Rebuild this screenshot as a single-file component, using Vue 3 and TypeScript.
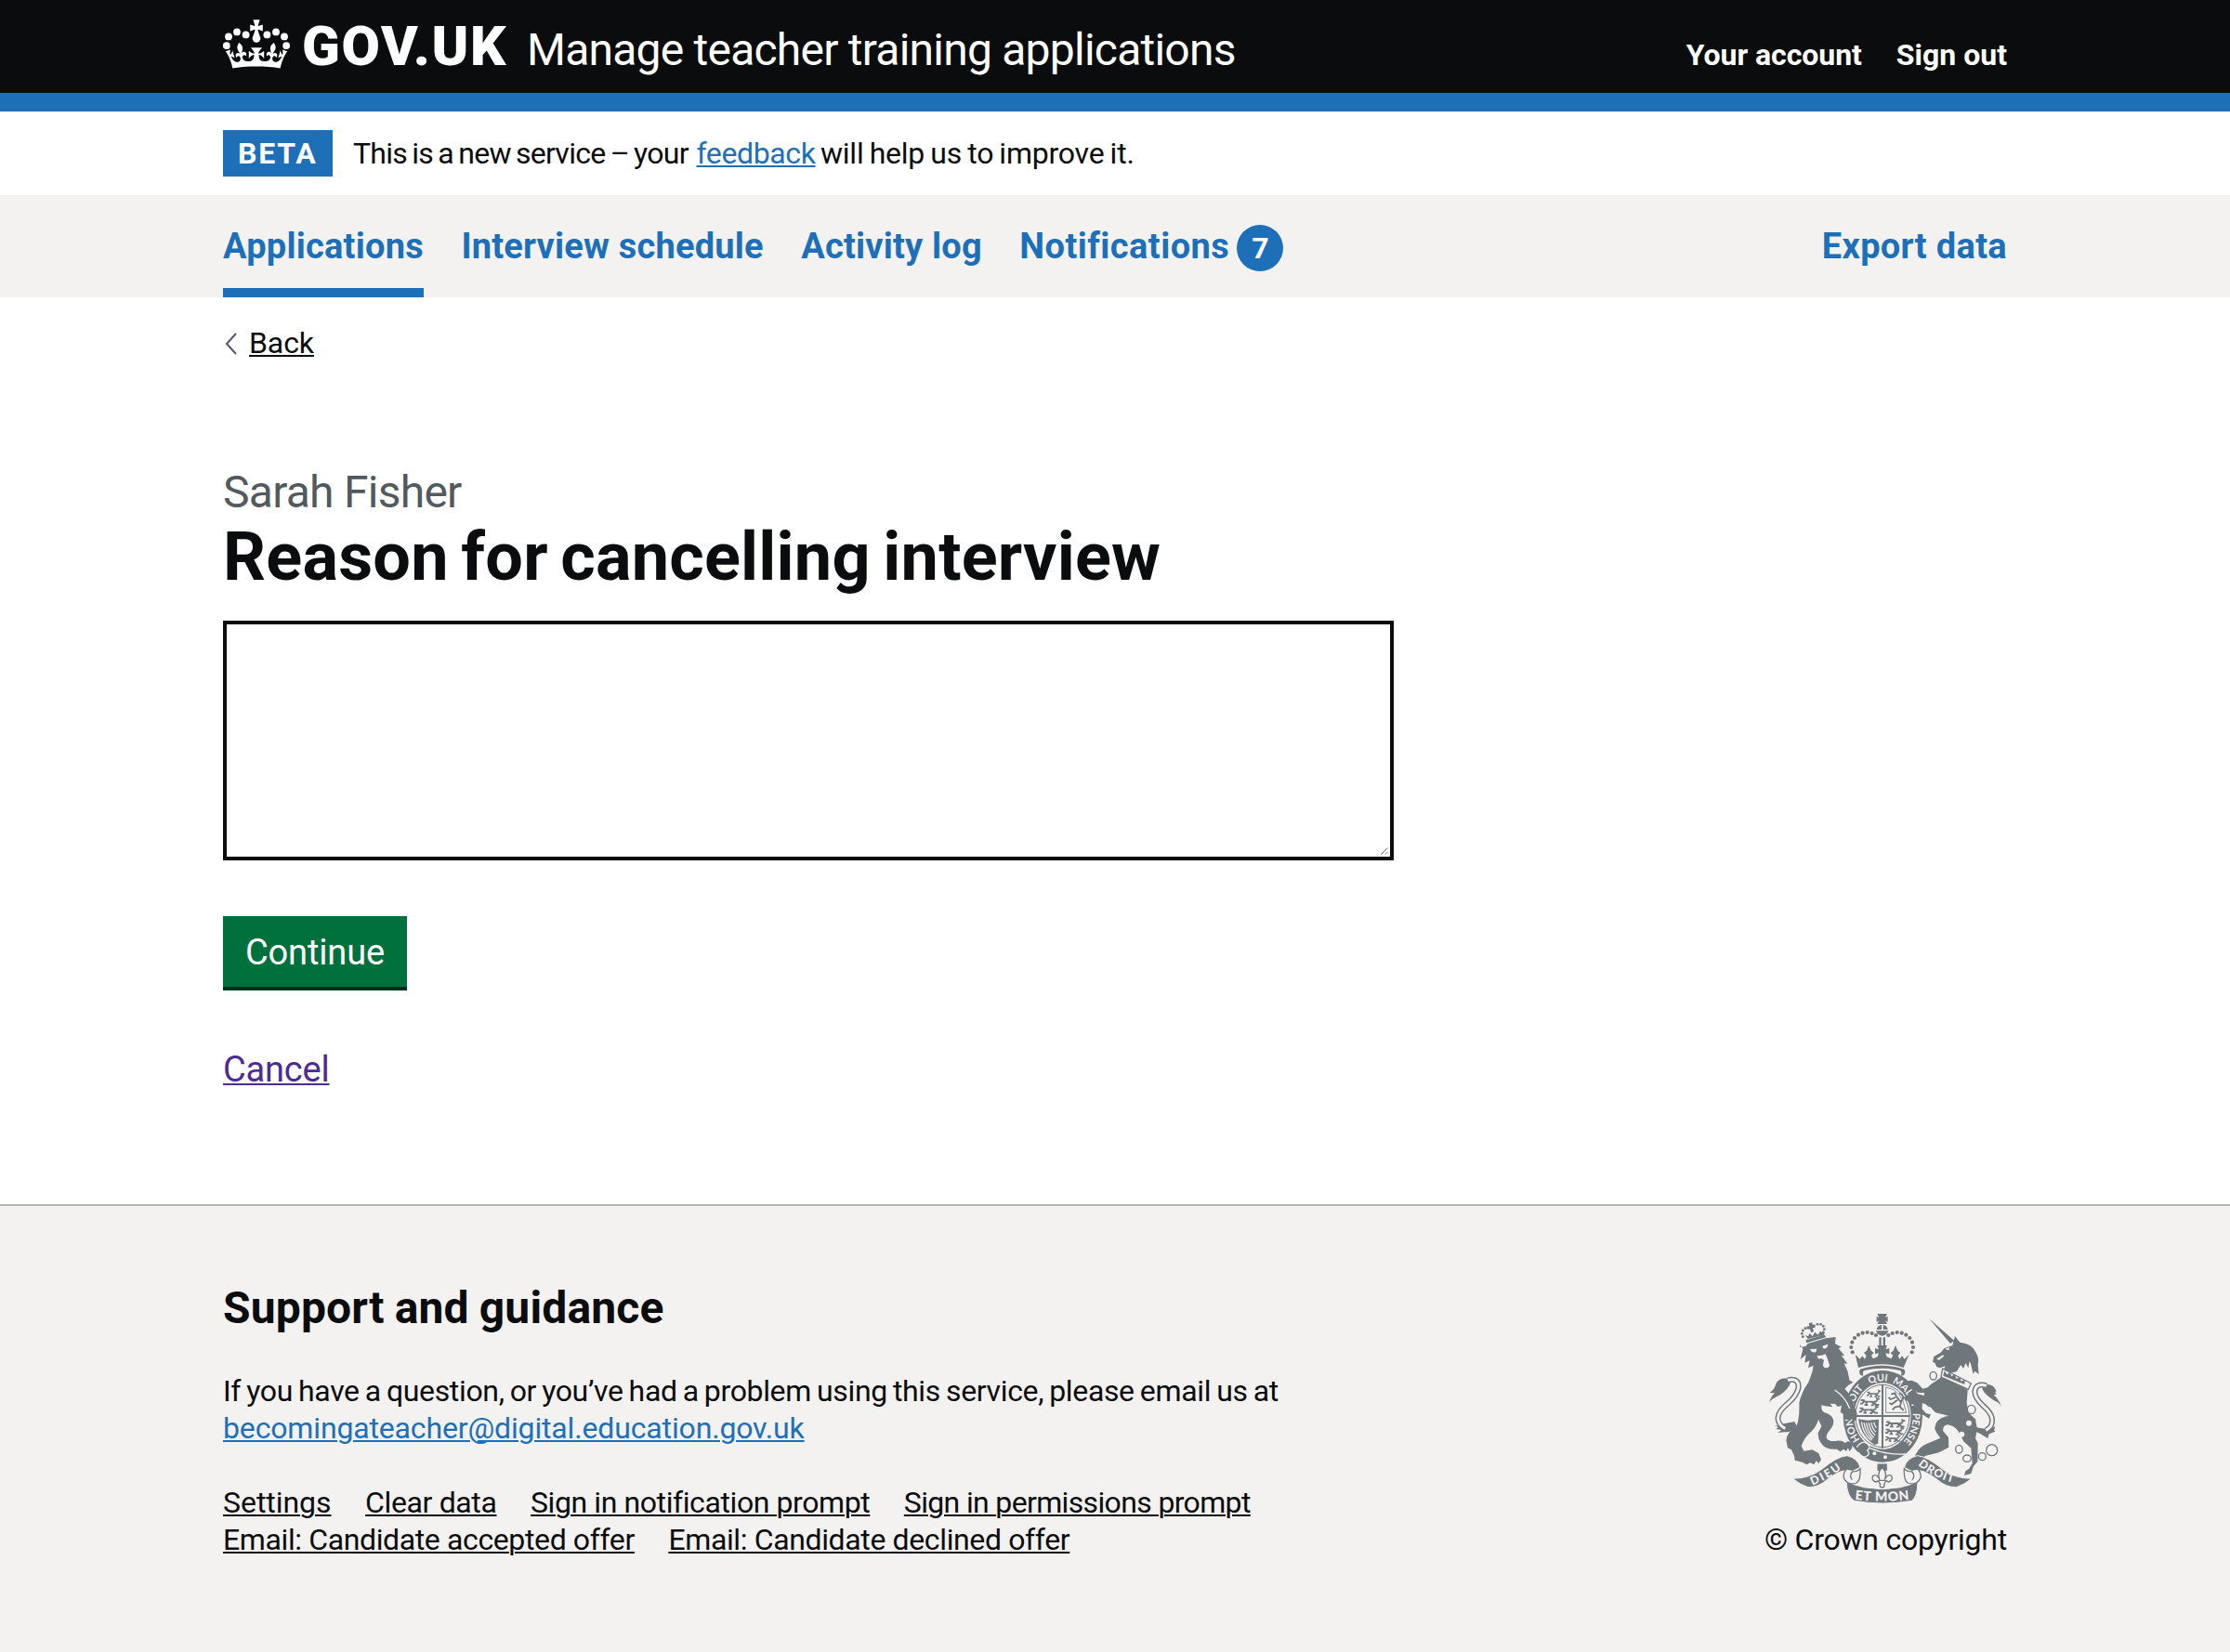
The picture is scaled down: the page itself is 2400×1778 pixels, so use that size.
<script setup lang="ts">
interface NavItem {
  label: string
  spacing: string
  current?: boolean
  count?: number
}

interface FooterLink {
  label: string
  spacing: string
}

const navItems: NavItem[] = [
  { label: 'Applications', spacing: '0.24px', current: true },
  { label: 'Interview schedule', spacing: '0.2px' },
  { label: 'Activity log', spacing: '0.2px' },
  { label: 'Notifications', spacing: '0.45px', count: 7 },
]

const footerRows: FooterLink[][] = [
  [
    { label: 'Settings', spacing: '-0.04px' },
    { label: 'Clear data', spacing: '-0.36px' },
    { label: 'Sign in notification prompt', spacing: '-0.41px' },
    { label: 'Sign in permissions prompt', spacing: '-0.65px' },
  ],
  [
    { label: 'Email: Candidate accepted offer', spacing: '-0.38px' },
    { label: 'Email: Candidate declined offer', spacing: '-0.37px' },
  ],
]

const crownBeads = [
  [3, 13.2], [7.5, 10.7], [12.3, 12.2], [1.9, 18.1],
  [33, 13.2], [28.5, 10.7], [23.7, 12.2], [34.1, 18.1],
]

const crestBeads = [
  [341, 196], [337, 180], [340, 164], [348, 150], [360, 140], [374, 134], [389, 132], [404, 135], [417, 141],
  [533, 196], [537, 180], [534, 164], [526, 150], [514, 140], [500, 134], [485, 132], [470, 135], [457, 141],
]

const lionCrownBeads = [
  [181, 146], [178, 136], [181, 126], [189, 119], [197, 117], [216, 111], [228, 106], [239, 106], [247, 112], [250, 122], [247, 132],
]

const chainRings = [
  [602, 272, 11, 13], [592, 357, 12, 14], [725, 381, 13, 14], [685, 509, 11, 13],
  [711, 539, 13, 11], [760, 533, 12, 12], [791, 512, 18, 18],
]

const shieldLions = [
  'translate(386 320) scale(.72 .9)', 'translate(365 345)', 'translate(361 371)',
  'translate(447 415)', 'translate(446 440) scale(.96)', 'translate(446 465) scale(.78 .85)',
]
</script>

<template>
  <div class="page">
    <header class="header">
      <div class="container header-row">
        <svg class="crown" viewBox="0 0 36 32" aria-hidden="true">
          <circle v-for="(b, i) in crownBeads" :key="i" :cx="b[0]" :cy="b[1]" r="1.95" />
          <path d="M16.2 4.1h3.6l-1 3.1.2.3 2.4-.8v3.6l-2.4-.9-.3.3 1.5 4.3a2.2 2.4 0 1 1-4.4 0l1.5-4.3-.3-.3-2.4.9V6.7l2.4.8.2-.3z" />
          <g id="half-crown">
            <path d="M17.9 29.3c4.7 0 9 .3 12.9.9 1.1-4.6 2.4-7.2 3.8-9.1l-2.6-.9c.3 1.3.3 1.9 0 2.8-.4-.4-.8-1.2-1.1-2.4l-1.2 4.2c.8-.5 1.4-.9 2-.9-1.2 2.6-2.7 3.2-3.6 3-1.2-.2-1.7-1.3-1.5-2.2.3-1.3 1.6-1.6 2.2-.1 1.2-2.4-.8-3.1-2.1-2.4 1.9-1.9 2.2-3.6.6-5.7-2.2 1.7-2.2 3.3-1.2 5.6-1.3-1.5-3.3-.7-2.5 1.7.9-1.4 2.1-.5 1.9.8-.2 1.1-1.7 2.1-3.5 1.9-2.6-.2-2.7-2.1-2.7-3.5.6-.1 1.8.5 2.8 2v-4.1c-1.1 1.1-2.1 1.4-3.2 1.4.4-1.2 2.1-3.2 2.1-3.2h-3.1z" />
          </g>
          <use href="#half-crown" transform="translate(36 0) scale(-1 1)" />
        </svg>
        <span class="logotype">GOV.UK</span>
        <span class="service">Manage teacher training applications</span>
        <nav class="account">
          <a class="account-link first">Your account</a>
          <a class="account-link">Sign out</a>
        </nav>
      </div>
    </header>

    <div class="container phase">
      <strong class="tag">BETA</strong>
      <p class="phase-text">
        <span class="intro">This is a new service – your</span>
        <a class="feedback">feedback</a>
        <span class="outro">will help us to improve it.</span>
      </p>
    </div>

    <nav class="nav">
      <div class="container nav-row">
        <a v-for="item in navItems" :key="item.label" class="nav-item" :class="{ current: item.current }">
          <span :style="{ letterSpacing: item.spacing }">{{ item.label }}</span>
          <span v-if="item.count" class="count">{{ item.count }}</span>
        </a>
        <a class="nav-item export">Export data</a>
      </div>
    </nav>

    <main class="container main">
      <a class="back">
        <svg class="chevron" viewBox="0 0 14 24" aria-hidden="true"><path d="M12 1 2 12l10 11" /></svg>
        <span>Back</span>
      </a>
      <span class="caption">Sarah Fisher</span>
      <h1 class="heading">Reason for cancelling interview</h1>
      <div class="field">
        <textarea class="textarea" aria-label="Reason for cancelling interview"></textarea>
        <svg class="grip" viewBox="0 0 8 8" aria-hidden="true"><path d="M.5 7.5l7-7M5 7.5 7.5 5" /></svg>
      </div>
      <button class="button" type="button">Continue</button>
      <a class="cancel">Cancel</a>
    </main>

    <footer class="footer">
      <div class="container footer-row">
        <div class="support">
          <h2 class="support-title">Support and guidance</h2>
          <p class="support-text">
            <span class="question">If you have a question, or you’ve had a problem using this service, please email us at</span>
            <a class="email">becomingateacher@digital.education.gov.uk</a>
          </p>
          <div v-for="(row, i) in footerRows" :key="i" class="links">
            <a v-for="link in row" :key="link.label" :style="{ letterSpacing: link.spacing }">{{ link.label }}</a>
          </div>
        </div>
        <div class="crown-copyright">
          <svg class="crest" viewBox="72 72 750 612" aria-hidden="true">
            <!-- imperial crown -->
            <g class="ink">
              <path d="M421 72h32l-6 12 8-4v19l-8-5 6 11h-32l6-11-8 5V80l8 4zM419 123q2-14 16-15v15zM440 108q13 1 15 15h-15zM417 127h40q-4 15-20 16-16-1-20-16zM427 148h7v32h-7zM440 148h7v32h-7z" />
              <circle v-for="(b, i) in crestBeads" :key="i" :cx="b[0]" :cy="b[1]" r="6.3" />
              <path d="M350 203l15 15 8-10 8 10 5-11-8-9 9-7 7-17 7 17 9 7-8 9 6 10 14-6 4-12-12 3v-19l12 4-5-13h32l-5 13 12-4v19l-12-3 4 12 14 6 6-10-8-9 9-7 7-17 7 17 9 7-8 9 5 11 8-10 8 10 15-15-18 43q-65-22-146 0z" />
              <path d="M366 251q71-24 142 0 6 9-1 19l-9 2q4-16-4-17-57-14-114 0-8 3-4 17l-9-2q-7-10-1-19z" />
            </g>
            <!-- garter and shield -->
            <ellipse class="ink" cx="439" cy="403" rx="128" ry="148" />
            <ellipse class="paper" cx="438" cy="402" rx="92" ry="107" />
            <ellipse class="wire" cx="438" cy="402" rx="87" ry="101" />
            <path class="wire thick" d="M438 300v206M349 402h178" />
            <g class="beasts">
              <g v-for="(t, i) in shieldLions" :key="i" :transform="t">
                <path d="M3 6h9l4 5h28M13 9l-5 8H1M20 12l3 9h-8M38 11l8 6-4 5h-6M44 11l9 10h9M46 10q12 2 9-10l9 3" />
              </g>
              <path d="M466 332l12-4 4 10 16 20-4 14 12 12M480 342l-16 6-6-6M486 350l-18 14-8-4M494 370l-16 4-8 8M498 356q12-12 2-24l-8-4" />
            </g>
            <path class="wire fine" d="M449 309q52 6 66 82h-66z" />
            <path class="ink" d="M360 412l30 4 36-3-2 78-12 4q-44-28-52-83z" />
            <path class="scratch" d="M370 421q6 40 32 60M378 423q5 34 28 54M386 424q4 30 24 48M394 424q3 24 20 40M402 423q2 18 14 30M410 422q2 10 8 18" />
            <path id="garter" class="none" d="M438 515A98 113 0 0 1 438 289A98 113 0 0 1 438 515" />
            <g class="motto">
              <text><textPath href="#garter" startOffset="84">HON</textPath></text>
              <text><textPath href="#garter" startOffset="192">SOIT</textPath></text>
              <text><textPath href="#garter" startOffset="288">QUI</textPath></text>
              <text><textPath href="#garter" startOffset="363">MAL</textPath></text>
              <text><textPath href="#garter" startOffset="452">Y</textPath></text>
              <text><textPath href="#garter" startOffset="488">PENSE</textPath></text>
            </g>
            <path class="line" d="M355 503q16-24 34-12 14 14 0 22 12 12-4 20-18 6-24-14M398 506q50 22 116 19" />
            <circle class="paper" cx="412" cy="523" r="6" /><circle class="paper" cx="447" cy="535" r="6" />
            <!-- lion -->
            <g class="ink">
              <path d="M190 157l62-17 3 8-62 18zM200 103l11-3 1 8 8-1 1 9-8 2 3 12-9 2-3-11-8 1-1-8 7-2zM188 140l10 5 5-10 9 10 8-14 9 9 8-12 9 6 5-2-2 9-52 12z" />
              <circle v-for="(b, i) in lionCrownBeads" :key="i" :cx="b[0]" :cy="b[1]" r="4.3" />
              <path d="M172 180l18-3 7-9 58-17 32-4-2 22 20 10-9 5 20 24-11-2 20 27-11-1 12 27 5 27 12 7-15 9-12 12q22 22 28 50l12 30-2 20-10 6-4-10-7 8-9-3-2-12-8 3-2-9-10-8 4-20-12 3-9-9-16-1 8 11-24-3-12-3q-2 18 10 24 22 6 28 22 4 16-8 30-16 18-14 30 8 12 28 10 22-4 32 6l10-6 14 8-1 14-9 12-4-12-6 10-9-6-10 8-12-8q-34 2-46-14-14-14-14-38l11-22-10-22q-6 22-20 36-26 22-35 50l8 16 28-4 20 12 8 20-8 12-8-8-7 12-12-6-12 6-14-8-24-6-2-14-9-20-12-6-5-24q2-26 34-48 10-26 8-74 8-36 30-66l12-32 4-22-17 8 5-24-16 7 4-26-18 15 8-34-10-14z" />
              <path d="M72 358q8-22 18-30-10 0-16-2 16-8 20-28 8-18 32-18 22 2 12 22-14 24-42 38-14 6-24 18zM88 432q14 4 24-4l42-8 10 20q-22 14-42 14l-22 2 12-9-18-3 8-6z" />
            </g>
            <path class="tail-ink" d="M132 286q40-8 34 28-8 26-32 46-40 32-32 58 6 18 22 24" />
            <path class="tail-gap" d="M132 286q40-8 34 28-8 26-32 46-40 32-32 58 6 18 22 24" />
            <path class="paper" d="M204 186l22-1-3 10q-12 6-19-9zM244 176l18-6q-2 16-15 14zM226 208l16-2 12-4 6 14 7 22q-2 10-12 9-12-2-8-16l2-10-9-5-8 2z" />
            <path class="line" d="M284 318q34 22 48 60" />
            <!-- unicorn -->
            <g class="ink">
              <path d="M588 87l82 72-13 9zM672 144l16 20q38 4 50 30 14 22 8 42l3 31-13-10-5 10-8-34-4-8-4 22-8-16-8 18-8-12-14 22-28 6-14-12 6-12-18 6-10-4-6-12-7-4 4-17 22-13 12-14 26-9z" />
              <path d="M628 277l28 6 57 35-3 42 6 32 22 20 6 32-6 30 8 16-1 60-13 14-8 24-22 6 4-14 12-8 10-18-4-48-24-22-18-34q-14-18-35-20-16 4-13 21l17 20 1 32-32 17-42 10-22 12-16-2 5-14q14-28 44-38l36-15q-12-14-18-28 0-36 44-44l-42-10-20-22-22-9-2 18 14 16 15 3-6 13-18-11-26-10-8-32-23-5-7-9 16-10 30-2 20 5 2-8-24-2-12-14-22-10-15 1 10-13 21-3 18 8 18 19 16-4 10-10z" />
              <path d="M822 372q-10-16-24-20-28-18-36-34-6-18 12-18 22-2 32 22-8 2 0 10-6 2-10 0 18 16 26 40zM734 436q26 10 50 6l18-6-4 12 4 4-20 8-4 14-26-16-18-8z" />
            </g>
            <path class="tail-ink" d="M774 304q-36-10-38 20 0 20 28 46 30 26 28 48 0 20-20 30" />
            <path class="tail-gap" d="M774 304q-36-10-38 20 0 20 28 46 30 26 28 48 0 20-20 30" />
            <path class="collar" d="M632 249l92 48-9 19-88-40z" />
            <path class="ink" d="M634 272l4-16 8 12 10-8 5 14 10-6 6 14 10-6 5 14 12-6-1 16z" />
            <path class="paper" d="M640 186l14-6-2 10zM612 218l22-14 2 5-15 12z" />
            <circle class="paper" cx="717" cy="425" r="9" /><circle class="paper" cx="694" cy="461" r="9" /><circle class="paper" cx="584" cy="297" r="7" />
            <ellipse v-for="(c, i) in chainRings" :key="i" class="ring" :cx="c[0]" :cy="c[1]" :rx="c[2]" :ry="c[3]" />
            <!-- ribbon -->
            <g class="ink ribbons">
              <path d="M148 604q54 0 94-30 50-42 82-44 34 8 42 38l-24 12q-34-12-84 28-26 24-60 24-26-8-50-28z" />
              <path d="M726 604q-54 0-94-30-50-42-82-44-34 8-42 38l24 12q34-12 84 28 26 24 60 24 26-8 50-28z" />
              <path d="M322 616q115 44 230 0-2 50-20 60-95 16-185 0-24-14-25-60z" />
              <path d="M420 555h34v25h-34z" />
            </g>
            <path class="ribbon" d="M322 574q-14 14-8 30 14 24 40 14 14-8 12-46-8 10-26 10-10 14 0 26M552 574q14 14 8 30-14 24-40 14-14-8-12-46 8 10 26 10 10 14 0 26" />
            <path class="lily" d="M437 567q-18 20-8 40-10-20-22-12-6 16 10 20 6-6 10 0l4 8q-4 8 6 10 10-2 6-10l4-8q4-6 10 0 16-4 10-20-12-8-22 12 10-20-8-40zM425 610h24" />
            <path id="dieu" class="none" d="M211 626Q270 602 314 566" />
            <path id="droit" class="none" d="M552 560Q606 606 680 620" />
            <path id="mon" class="none" d="M346 671Q437 683 528 671" />
            <g class="motto large">
              <text textLength="108"><textPath href="#dieu">DIEU</textPath></text>
              <text textLength="128"><textPath href="#droit">DROIT</textPath></text>
              <text class="etmon" textLength="176"><textPath href="#mon" startOffset="3">ET MON</textPath></text>
            </g>
          </svg>
          <span class="copyright">© Crown copyright</span>
        </div>
      </div>
    </footer>
  </div>
</template>

<style>
body {
  margin: 0;
  background: #fff;
}
</style>

<style scoped>
.page {
  display: flex;
  flex-direction: column;
  height: 1778px;
  overflow: hidden;
  color: #0b0c0d;
  font: 400 32px/40px Roboto, "Liberation Sans", sans-serif;
}

.container {
  width: 1920px;
  margin: 0 auto;
}

.header {
  height: 100px;
  flex: none;
  border-bottom: 20px solid #1d70b8;
  background: #0b0c0e;
  color: #fff;
}

.header-row {
  display: flex;
  align-items: flex-start;
}

.crown {
  width: 72px;
  height: 64px;
  margin-top: 13px;
  fill: #fff;
}

.logotype {
  width: 255px;
  padding-top: 14px;
  box-sizing: border-box;
  padding-left: 13px;
  font-size: 60px;
  font-weight: 900;
  line-height: 71px;
  letter-spacing: 1.6px;
}

.service {
  padding-top: 25px;
  font-size: 48px;
  line-height: 57px;
  letter-spacing: -0.77px;
  white-space: nowrap;
}

.account {
  display: flex;
  gap: 37px;
  margin-left: auto;
  padding-top: 39px;
  font-weight: 700;
}

.account-link.first {
  letter-spacing: -0.05px;
}

.phase {
  display: flex;
  flex: none;
  align-items: flex-start;
  height: 90px;
}

.tag {
  width: 118px;
  height: 50px;
  margin: 20px 22px 0 0;
  box-sizing: border-box;
  padding: 5px 0 0 16px;
  background: #1d70b8;
  color: #fff;
  letter-spacing: 1.8px;
}

.phase-text {
  display: flex;
  margin: 25px 0 0;
  white-space: nowrap;
}

.intro {
  width: 369.5px;
  letter-spacing: -0.73px;
  word-spacing: -2px;
}

.feedback,
.email {
  color: #1d70b8;
}

.feedback,
.email,
.back span,
.cancel,
.links a {
  text-decoration: underline;
  text-decoration-thickness: 2px;
  text-underline-offset: 2px;
}

.feedback {
  width: 133.5px;
  letter-spacing: -0.38px;
}

.outro {
  letter-spacing: -0.23px;
  word-spacing: -1.5px;
}

.nav {
  height: 110px;
  flex: none;
  background: #f3f2f1;
}

.nav-row {
  display: flex;
  gap: 40.5px;
  height: 110px;
}

.nav-item {
  display: flex;
  box-sizing: border-box;
  height: 110px;
  padding-top: 33px;
  color: #1d70b8;
  font-size: 38px;
  font-weight: 700;
  line-height: 44px;
}

.nav-item.current {
  border-bottom: 10px solid #1d70b8;
}

.export {
  margin-left: auto;
  letter-spacing: 0.33px;
}

.count {
  width: 50px;
  height: 50px;
  margin: -1px 0 0 8px;
  border-radius: 50%;
  background: #1d70b8;
  color: #fff;
  font-size: 32px;
  line-height: 50px;
  text-align: center;
}

.main {
  display: flex;
  flex: none;
  flex-direction: column;
  align-items: flex-start;
  height: 976px;
}

.back {
  display: flex;
  margin-top: 29px;
}

.chevron {
  width: 14px;
  height: 24px;
  margin: 9px 12px 0 2px;
  fill: none;
  stroke: #505a5f;
  stroke-width: 2;
}

.back span {
  letter-spacing: -0.1px;
}

.caption {
  margin-top: 112px;
  color: #505a5f;
  font-size: 48px;
  line-height: 57px;
  letter-spacing: -0.74px;
}

.heading {
  margin: -1px 0 26px;
  font-size: 72px;
  font-weight: 700;
  line-height: 85px;
  letter-spacing: 0.2px;
  word-spacing: -4.5px;
}

.field {
  position: relative;
  width: 1260px;
  height: 258px;
}

.textarea {
  display: block;
  box-sizing: border-box;
  width: 1260px;
  height: 258px;
  border: 4px solid #0b0c0c;
  border-radius: 0;
  outline: none;
  background: #fff;
  resize: none;
}

.grip {
  position: absolute;
  right: 6px;
  bottom: 6px;
  width: 8px;
  height: 8px;
  fill: none;
  stroke: #666;
  stroke-width: 1;
}

.button {
  width: 198px;
  height: 76px;
  margin-top: 60px;
  padding: 2px 0 0;
  border: 0;
  background: #00703c;
  box-shadow: 0 4px 0 #002d18;
  color: #fff;
  font: 400 38px/44px Roboto, "Liberation Sans", sans-serif;
  letter-spacing: -0.14px;
}

.cancel {
  margin-top: 67px;
  color: #4c2c92;
  font-size: 38px;
  line-height: 44px;
  letter-spacing: -0.2px;
}

.footer {
  flex: 1;
  border-top: 2px solid #b1b4b6;
  background: #f3f2f1;
}

.footer-row {
  display: flex;
  justify-content: space-between;
}

.support-title {
  margin: 81px 0 41px;
  font-size: 48px;
  font-weight: 700;
  line-height: 57px;
  letter-spacing: 0.15px;
  word-spacing: -1px;
}

.support-text {
  display: flex;
  flex-direction: column;
  align-items: flex-start;
  margin: 0 0 40px;
}

.question {
  letter-spacing: -0.35px;
  word-spacing: -1.5px;
}

.email {
  letter-spacing: -0.15px;
}

.links {
  display: flex;
  gap: 36.5px;
}

.crown-copyright {
  display: flex;
  flex-direction: column;
  align-items: flex-end;
  padding-top: 116px;
}

.copyright {
  margin-top: 19px;
  letter-spacing: -0.23px;
}

.crest {
  width: 250px;
  height: 204px;
  margin-right: 6px;
}

.ink {
  fill: #6f777b;
}

.ribbons {
  stroke: #f3f2f1;
  stroke-width: 3;
}

.paper {
  fill: #f3f2f1;
}

.none {
  fill: none;
}

.wire,
.beasts {
  fill: none;
  stroke: #6f777b;
  stroke-width: 3;
}

.wire.thick {
  stroke-width: 6;
}

.wire.fine {
  stroke-width: 2.5;
}

.beasts {
  stroke-width: 5.5;
}

.scratch,
.line {
  fill: none;
  stroke: #f3f2f1;
  stroke-width: 4;
}

.tail-ink,
.tail-gap {
  fill: none;
  stroke: #6f777b;
  stroke-width: 18;
}

.tail-gap {
  stroke: #f3f2f1;
  stroke-width: 9;
}

.collar,
.ring,
.ribbon,
.lily {
  fill: #f3f2f1;
  stroke: #6f777b;
  stroke-width: 4;
}

.ring {
  fill: none;
}

.motto {
  fill: #f3f2f1;
  font: 700 32px Lato, sans-serif;
}

.motto.large {
  font-size: 37px;
  font-weight: 900;
}

.motto .etmon {
  font-size: 42px;
}
</style>
